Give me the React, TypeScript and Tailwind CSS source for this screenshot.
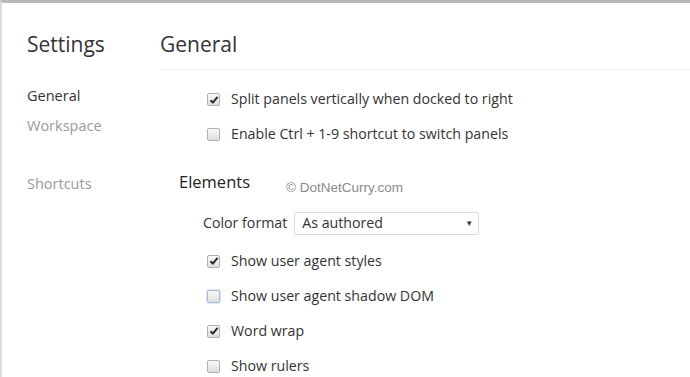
import React from 'react';

function Check({ checked, focus }: { checked?: boolean; focus?: boolean }) {
  return (
    <span
      className={`flex items-center justify-center w-[13px] h-[13px] rounded-[2px] border bg-gradient-to-b from-[#fafafa] to-[#dedede] ${
        focus ? 'border-[#a9b8d8] shadow-[0_0_0_1px_#dfe6f4]' : 'border-[#b0b0b0]'
      }`}
    >
      {checked && (
        <svg width="10" height="10" viewBox="0 0 10 10">
          <path d="M1.5 5.2 L3.8 7.6 L8.6 1.8" fill="none" stroke="#2a2a2a" strokeWidth="2" strokeLinejoin="round" />
        </svg>
      )}
    </span>
  );
}

function Row({ label, checked, focus }: { label: string; checked?: boolean; focus?: boolean }) {
  return (
    <div className="flex items-center h-[35px]">
      <Check checked={checked} focus={focus} />
      <span className="ml-[11px] text-[#333]">{label}</span>
    </div>
  );
}

export default function App() {
  return (
    <div
      className="w-[690px] h-[377px] overflow-hidden bg-white border-t-[3px] border-l-2 border-t-[#b9b9b9] border-l-[#dcdcdc] text-[14.2px] leading-none"
      style={{ fontFamily: '"Segoe UI", "Open Sans", sans-serif' }}
    >
      <div className="flex">
        {/* Sidebar */}
        <div className="w-[158px] shrink-0 pl-[25px] pt-[31px]">
          <h1 className="text-[21px] text-[#333] h-[34px]">Settings</h1>
          <div className="mt-[21px] flex flex-col text-[14.5px]">
            <span className="h-[30px] text-[#333]">General</span>
            <span className="h-[58px] text-[#999]">Workspace</span>
            <span className="text-[#999]">Shortcuts</span>
          </div>
        </div>

        {/* Content */}
        <div className="flex-1">
          <div className="pt-[31px] h-[67px] border-b border-[#eeeeee]">
            <h2 className="text-[21px] text-[#333]">General</h2>
          </div>
          <div className="pl-[47px] pt-[12px]">
            <Row label="Split panels vertically when docked to right" checked />
            <Row label="Enable Ctrl + 1-9 shortcut to switch panels" />
          </div>
          <div className="pl-[19px] mt-[22px] flex items-end">
            <h3 className="text-[16.5px] text-[#222]">Elements</h3>
            <span className="ml-[36px] text-[13.5px] text-[#8a8a8a] translate-y-[4px]" style={{ fontFamily: '"Liberation Sans", Arial, sans-serif' }}>
              © DotNetCurry.com
            </span>
          </div>
          <div className="pl-[43px] mt-[21px] flex items-center">
            <span className="text-[#333]">Color format</span>
            <div className="ml-[7px] w-[185px] h-[23px] border border-[#dadada] rounded-[2px] flex items-center justify-between pl-[7px] pr-[5px] text-[#333]">
              <span>As authored</span>
              <span className="text-[8px]">▼</span>
            </div>
          </div>
          <div className="pl-[47px] mt-[9px]">
            <Row label="Show user agent styles" checked />
            <Row label="Show user agent shadow DOM" focus />
            <Row label="Word wrap" checked />
            <Row label="Show rulers" />
          </div>
        </div>
      </div>
    </div>
  );
}
